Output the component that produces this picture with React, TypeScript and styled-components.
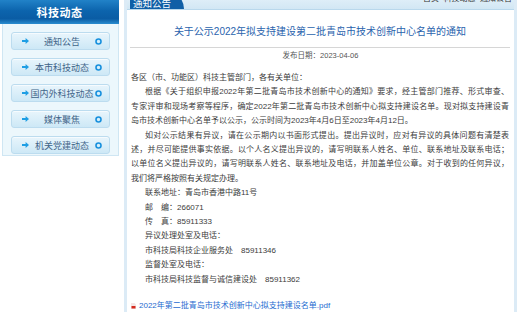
import React from 'react';
import styled, { createGlobalStyle } from 'styled-components';

const GlobalStyle = createGlobalStyle`
  html, body {
    margin: 0;
    padding: 0;
    background: #fff;
  }
  body {
    font-family: "Liberation Sans", "Noto Sans CJK SC", sans-serif;
  }
`;

const Page = styled.div`
  display: flex;
  align-items: flex-start;
  gap: 4px;
  width: 522px;
  height: 312px;
  overflow: hidden;
`;

const Sidebar = styled.aside`
  flex: none;
  width: 119px;
  margin-right: 1px;
`;

const SideHead = styled.div`
  height: 24px;
  display: flex;
  align-items: center;
  justify-content: center;
  color: #fff;
  font: bold 11px "Noto Sans CJK SC", sans-serif;
  letter-spacing: 0.5px;
  background: linear-gradient(180deg, #2182c8 0%, #0c64ad 45%, #0a5ca4 78%, #2a8dd0 100%);
`;

const SideBody = styled.div`
  margin-left: 2px;
  padding: 8px 8px 1px;
  background: #ecf7fc;
  border: 1px solid #cfe6f3;
  border-top: none;
  display: flex;
  flex-direction: column;
  gap: 8px;
`;

const NavButton = styled.a`
  box-sizing: border-box;
  height: 18px;
  display: flex;
  align-items: center;
  padding: 0 7px 0 10px;
  border: 1px solid #bcdcef;
  border-radius: 3px;
  background: linear-gradient(180deg, #e8f5fc 0%, #cde8f6 100%);
  box-shadow: inset 0 1px 0 #f6fbfe;
  color: #3f6488;
  font: 9px "Noto Sans CJK SC", sans-serif;
  text-decoration: none;
`;

const NavLabel = styled.span`
  flex: 1;
  text-align: center;
`;

const Main = styled.main`
  flex: none;
  width: 387px;
  min-height: 312px;
  border-left: 3px solid #dcebf6;
  border-right: 3px solid #dcebf6;
`;

const TopBar = styled.div`
  box-sizing: border-box;
  height: 16px;
  margin-top: -6px;
  display: flex;
  align-items: stretch;
  justify-content: space-between;
  background: linear-gradient(180deg, #e6f2fa 0%, #d2e7f4 100%);
  border-bottom: 1px solid #b9d8ec;
`;

const Tab = styled.span`
  margin-left: 3px;
  padding: 2px 13px 0 3px;
  display: flex;
  align-items: center;
  background: #105fa6;
  border-top-right-radius: 12px 15px;
  color: #fff;
  font: 9.5px "Noto Sans CJK SC", sans-serif;
`;

const Crumbs = styled.span`
  padding-right: 2px;
  display: flex;
  align-items: flex-start;
  color: #333;
  font: 8px/8px "Noto Sans CJK SC", sans-serif;
`;

const Title = styled.h1`
  margin: 0 4px 0 3px;
  padding: 15px 0 8px;
  border-bottom: 1px solid #d6d6d6;
  color: #2a63ad;
  font: normal 10px/14px "Liberation Sans", "Noto Sans CJK SC", sans-serif;
  text-align: center;
`;

const DateLine = styled.div`
  margin-top: 3px;
  color: #555;
  font-size: 7.5px;
  line-height: 10px;
  text-align: center;
`;

const Body = styled.div`
  margin-top: 10px;
  padding: 0 5px 0 4px;
  color: #3c3c3c;
  font-size: 8px;
  line-height: 14.4px;
`;

const Line = styled.div<{ $full?: boolean; $indent?: boolean }>`
  white-space: nowrap;
  text-align: justify;
  text-align-last: ${({ $full }) => ($full ? 'justify' : 'left')};
  padding-left: ${({ $indent }) => ($indent ? '14px' : '0')};
`;

const Attachment = styled.a`
  margin-top: 12px;
  padding-left: 4px;
  display: flex;
  align-items: center;
  gap: 3px;
  color: #1e6bd0;
  font-size: 8px;
  line-height: 14px;
  text-decoration: none;
`;

const Arrow = () => (
  <svg width="7" height="6" viewBox="0 0 7 6">
    <path d="M0 2h3.6V0L7 3 3.6 6V4H0z" fill="#1e9ee4" />
  </svg>
);

const Ring = () => (
  <svg width="7" height="7" viewBox="0 0 7 7">
    <circle cx="3.5" cy="3.5" r="2.5" fill="#d6f0fc" stroke="#1890dd" strokeWidth="1.6" />
  </svg>
);

const PdfIcon = () => (
  <svg width="5" height="6" viewBox="0 0 5 6">
    <path d="M0 0h3.5L5 1.5V6H0z" fill="#f3e6e6" />
    <path d="M0.5 3h4v2.5h-4z" fill="#d42a1e" />
  </svg>
);

const navItems = ['通知公告', '本市科技动态', '国内外科技动态', '媒体聚焦', '机关党建动态'];

type TextLine = { text: string; full?: boolean; indent?: boolean };

const lines: TextLine[] = [
  { text: '各区（市、功能区）科技主管部门，各有关单位：' },
  { text: '根据《关于组织申报2022年第二批青岛市技术创新中心的通知》要求，经主管部门推荐、形式审查、', full: true, indent: true },
  { text: '专家评审和现场考察等程序，确定2022年第二批青岛市技术创新中心拟支持建设名单。现对拟支持建设青', full: true },
  { text: '岛市技术创新中心名单予以公示，公示时间为2023年4月6日至2023年4月12日。' },
  { text: '如对公示结果有异议，请在公示期内以书面形式提出。提出异议时，应对有异议的具体问题有清楚表', full: true, indent: true },
  { text: '述，并尽可能提供事实依据。以个人名义提出异议的，请写明联系人姓名、单位、联系地址及联系电话；', full: true },
  { text: '以单位名义提出异议的，请写明联系人姓名、联系地址及电话，并加盖单位公章。对于收到的任何异议，', full: true },
  { text: '我们将严格按照有关规定办理。' },
  { text: '联系地址：青岛市香港中路11号', indent: true },
  { text: '邮　编：266071', indent: true },
  { text: '传　真：85911333', indent: true },
  { text: '异议处理处室及电话：', indent: true },
  { text: '市科技局科技企业服务处　85911346', indent: true },
  { text: '监督处室及电话：', indent: true },
  { text: '市科技局科技监督与诚信建设处　85911362', indent: true },
];

export default function App() {
  return (
    <>
      <GlobalStyle />
      <Page>
        <Sidebar>
          <SideHead>科技动态</SideHead>
          <SideBody>
            {navItems.map((item) => (
              <NavButton key={item} href="#">
                <Arrow />
                <NavLabel>{item}</NavLabel>
                <Ring />
              </NavButton>
            ))}
          </SideBody>
        </Sidebar>

        <Main>
          <TopBar>
            <Tab>通知公告</Tab>
            <Crumbs>首页&gt;科技动态&gt;通知公告</Crumbs>
          </TopBar>
          <Title>关于公示2022年拟支持建设第二批青岛市技术创新中心名单的通知</Title>
          <DateLine>发布日期：2023-04-06</DateLine>
          <Body>
            {lines.map((l, i) => (
              <Line key={i} $full={l.full} $indent={l.indent}>
                {l.text}
              </Line>
            ))}
          </Body>
          <Attachment href="#">
            <PdfIcon />
            2022年第二批青岛市技术创新中心拟支持建设名单.pdf
          </Attachment>
        </Main>
      </Page>
    </>
  );
}
